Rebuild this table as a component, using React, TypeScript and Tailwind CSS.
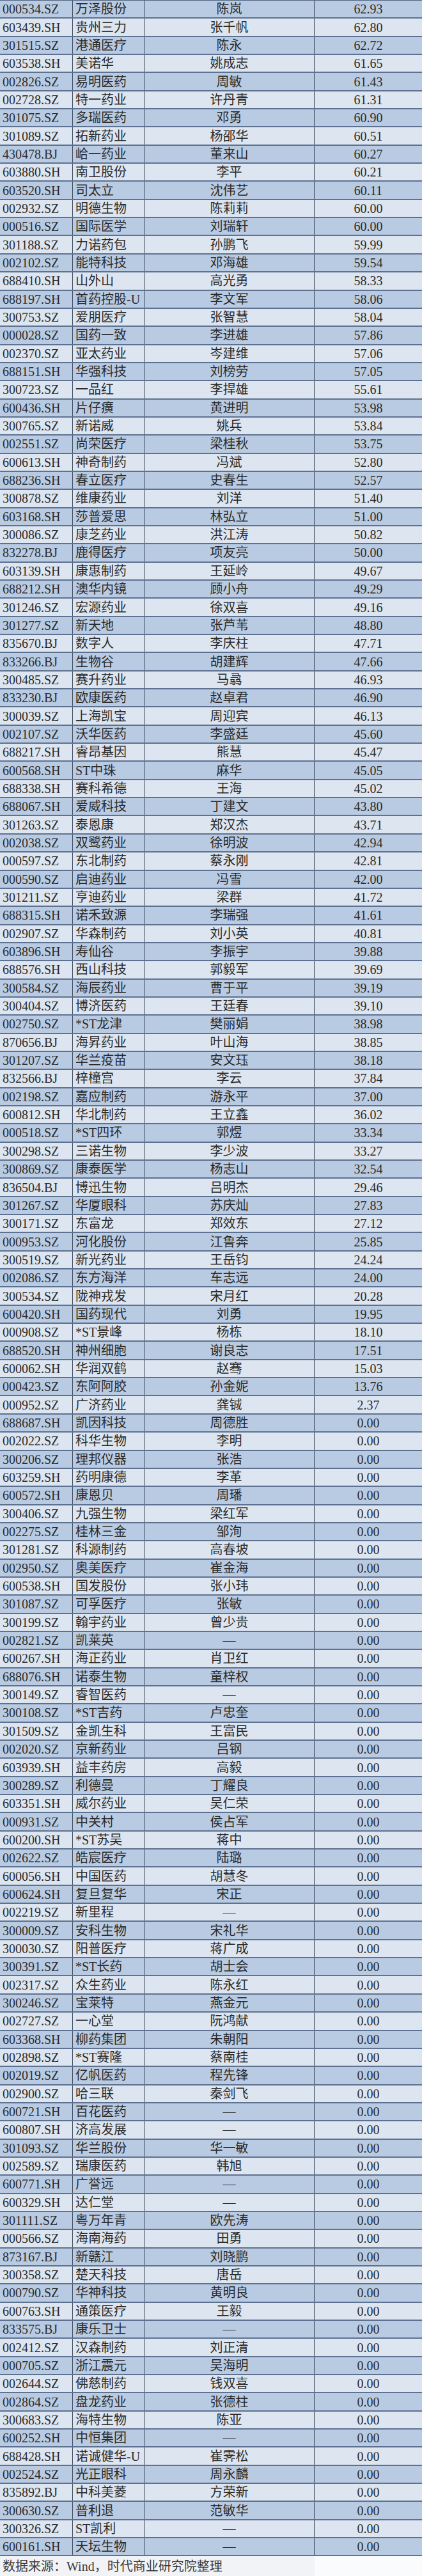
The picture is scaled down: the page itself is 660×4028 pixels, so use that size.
import clsx from 'clsx'

// 代码|简称|董秘|持股比例(%)
const raw = `000534.SZ|万泽股份|陈岚|62.93
603439.SH|贵州三力|张千帆|62.80
301515.SZ|港通医疗|陈永|62.72
603538.SH|美诺华|姚成志|61.65
002826.SZ|易明医药|周敏|61.43
002728.SZ|特一药业|许丹青|61.31
301075.SZ|多瑞医药|邓勇|60.90
301089.SZ|拓新药业|杨邵华|60.51
430478.BJ|峆一药业|董来山|60.27
603880.SH|南卫股份|李平|60.21
603520.SH|司太立|沈伟艺|60.11
002932.SZ|明德生物|陈莉莉|60.00
000516.SZ|国际医学|刘瑞轩|60.00
301188.SZ|力诺药包|孙鹏飞|59.99
002102.SZ|能特科技|邓海雄|59.54
688410.SH|山外山|高光勇|58.33
688197.SH|首药控股-U|李文军|58.06
300753.SZ|爱朋医疗|张智慧|58.04
000028.SZ|国药一致|李进雄|57.86
002370.SZ|亚太药业|岑建维|57.06
688151.SH|华强科技|刘榜劳|57.05
300723.SZ|一品红|李捍雄|55.61
600436.SH|片仔癀|黄进明|53.98
300765.SZ|新诺威|姚兵|53.84
002551.SZ|尚荣医疗|梁桂秋|53.75
600613.SH|神奇制药|冯斌|52.80
688236.SH|春立医疗|史春生|52.57
300878.SZ|维康药业|刘洋|51.40
603168.SH|莎普爱思|林弘立|51.00
300086.SZ|康芝药业|洪江涛|50.82
832278.BJ|鹿得医疗|项友亮|50.00
603139.SH|康惠制药|王延岭|49.67
688212.SH|澳华内镜|顾小舟|49.29
301246.SZ|宏源药业|徐双喜|49.16
301277.SZ|新天地|张芦苇|48.80
835670.BJ|数字人|李庆柱|47.71
833266.BJ|生物谷|胡建辉|47.66
300485.SZ|赛升药业|马骉|46.93
833230.BJ|欧康医药|赵卓君|46.90
300039.SZ|上海凯宝|周迎宾|46.13
002107.SZ|沃华医药|李盛廷|45.60
688217.SH|睿昂基因|熊慧|45.47
600568.SH|ST中珠|麻华|45.05
688338.SH|赛科希德|王海|45.02
688067.SH|爱威科技|丁建文|43.80
301263.SZ|泰恩康|郑汉杰|43.71
002038.SZ|双鹭药业|徐明波|42.94
000597.SZ|东北制药|蔡永刚|42.81
000590.SZ|启迪药业|冯雪|42.00
301211.SZ|亨迪药业|梁群|41.72
688315.SH|诺禾致源|李瑞强|41.61
002907.SZ|华森制药|刘小英|40.81
603896.SH|寿仙谷|李振宇|39.88
688576.SH|西山科技|郭毅军|39.69
300584.SZ|海辰药业|曹于平|39.19
300404.SZ|博济医药|王廷春|39.10
002750.SZ|*ST龙津|樊丽娟|38.98
870656.BJ|海昇药业|叶山海|38.85
301207.SZ|华兰疫苗|安文珏|38.18
832566.BJ|梓橦宫|李云|37.84
002198.SZ|嘉应制药|游永平|37.00
600812.SH|华北制药|王立鑫|36.02
000518.SZ|*ST四环|郭煜|33.34
300298.SZ|三诺生物|李少波|33.27
300869.SZ|康泰医学|杨志山|32.54
836504.BJ|博迅生物|吕明杰|29.46
301267.SZ|华厦眼科|苏庆灿|27.83
300171.SZ|东富龙|郑效东|27.12
000953.SZ|河化股份|江鲁奔|25.85
300519.SZ|新光药业|王岳钧|24.24
002086.SZ|东方海洋|车志远|24.00
300534.SZ|陇神戎发|宋月红|20.28
600420.SH|国药现代|刘勇|19.95
000908.SZ|*ST景峰|杨栋|18.10
688520.SH|神州细胞|谢良志|17.51
600062.SH|华润双鹤|赵骞|15.03
000423.SZ|东阿阿胶|孙金妮|13.76
000952.SZ|广济药业|龚铖|2.37
688687.SH|凯因科技|周德胜|0.00
002022.SZ|科华生物|李明|0.00
300206.SZ|理邦仪器|张浩|0.00
603259.SH|药明康德|李革|0.00
600572.SH|康恩贝|周璠|0.00
300406.SZ|九强生物|梁红军|0.00
002275.SZ|桂林三金|邹洵|0.00
301281.SZ|科源制药|高春坡|0.00
002950.SZ|奥美医疗|崔金海|0.00
600538.SH|国发股份|张小玮|0.00
301087.SZ|可孚医疗|张敏|0.00
300199.SZ|翰宇药业|曾少贵|0.00
002821.SZ|凯莱英|—|0.00
600267.SH|海正药业|肖卫红|0.00
688076.SH|诺泰生物|童梓权|0.00
300149.SZ|睿智医药|—|0.00
300108.SZ|*ST吉药|卢忠奎|0.00
301509.SZ|金凯生科|王富民|0.00
002020.SZ|京新药业|吕钢|0.00
603939.SH|益丰药房|高毅|0.00
300289.SZ|利德曼|丁耀良|0.00
603351.SH|威尔药业|吴仁荣|0.00
000931.SZ|中关村|侯占军|0.00
600200.SH|*ST苏吴|蒋中|0.00
002622.SZ|皓宸医疗|陆璐|0.00
600056.SH|中国医药|胡慧冬|0.00
600624.SH|复旦复华|宋正|0.00
002219.SZ|新里程|—|0.00
300009.SZ|安科生物|宋礼华|0.00
300030.SZ|阳普医疗|蒋广成|0.00
300391.SZ|*ST长药|胡士会|0.00
002317.SZ|众生药业|陈永红|0.00
300246.SZ|宝莱特|燕金元|0.00
002727.SZ|一心堂|阮鸿献|0.00
603368.SH|柳药集团|朱朝阳|0.00
002898.SZ|*ST赛隆|蔡南桂|0.00
002019.SZ|亿帆医药|程先锋|0.00
002900.SZ|哈三联|秦剑飞|0.00
600721.SH|百花医药|—|0.00
600807.SH|济高发展|—|0.00
301093.SZ|华兰股份|华一敏|0.00
002589.SZ|瑞康医药|韩旭|0.00
600771.SH|广誉远|—|0.00
600329.SH|达仁堂|—|0.00
301111.SZ|粤万年青|欧先涛|0.00
000566.SZ|海南海药|田勇|0.00
873167.BJ|新赣江|刘晓鹏|0.00
300358.SZ|楚天科技|唐岳|0.00
000790.SZ|华神科技|黄明良|0.00
600763.SH|通策医疗|王毅|0.00
833575.BJ|康乐卫士|—|0.00
002412.SZ|汉森制药|刘正清|0.00
000705.SZ|浙江震元|吴海明|0.00
002644.SZ|佛慈制药|钱双喜|0.00
002864.SZ|盘龙药业|张德柱|0.00
300683.SZ|海特生物|陈亚|0.00
600252.SH|中恒集团|—|0.00
688428.SH|诺诚健华-U|崔霁松|0.00
002524.SZ|光正眼科|周永麟|0.00
835892.BJ|中科美菱|方荣新|0.00
300630.SZ|普利退|范敏华|0.00
300326.SZ|ST凯利|—|0.00
600161.SH|天坛生物|—|0.00`

const rows = raw.split('\n').map((line) => {
  const [code, name, person, value] = line.split('|')
  return { code, name, person, value }
})

export default function App() {
  return (
    <div className="w-[660px] bg-white font-['Liberation_Serif','Noto_Sans_CJK_SC',serif] text-[20px] leading-none text-[#2b2b2b]">
      <div className="border-t border-[#51647d]">
        {rows.map((row, i) => (
          <div
            key={row.code}
            className={clsx(
              'grid h-[28.35px] grid-cols-[114px_112px_266px_1fr] border-b-2 border-[#5d7190]',
              i % 2 === 0 ? 'bg-[#b9cbe3]' : 'bg-[#dce5f0]',
            )}
          >
            <div className="flex items-center border-r border-[#3f4c5e] pl-1">{row.code}</div>
            <div className="flex items-center border-r border-[#3f4c5e] pl-1 whitespace-nowrap">
              {row.name}
            </div>
            <div className="flex items-center justify-center border-r border-[#3f4c5e]">
              {row.person}
            </div>
            <div className="flex items-center justify-center">{row.value}</div>
          </div>
        ))}
      </div>
      <div className="grid h-[31px] grid-cols-[492px_1fr]">
        <p className="flex items-center bg-[#f1f3f6] pl-1 text-[#3a3a3a]">
          数据来源：Wind，时代商业研究院整理
        </p>
        <div className="bg-[#fafbfc]" />
      </div>
    </div>
  )
}
